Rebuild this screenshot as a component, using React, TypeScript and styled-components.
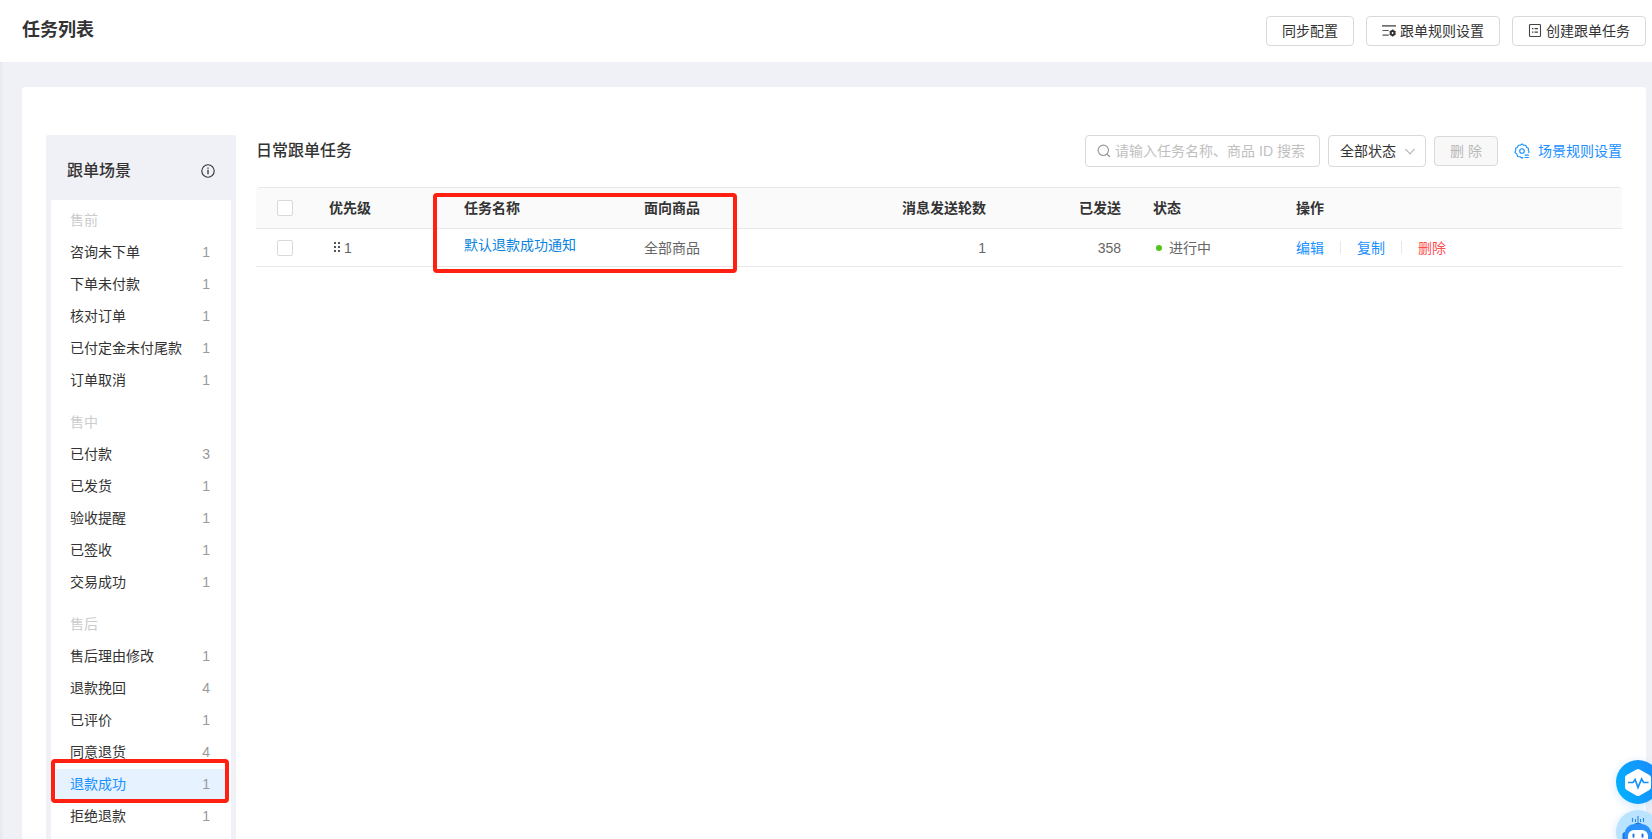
import React from 'react';
import styled, { createGlobalStyle } from 'styled-components';

const GlobalStyle = createGlobalStyle`
  *, *::before, *::after { box-sizing: border-box; }
  body {
    margin: 0;
    background: #f0f1f6;
    color: #333;
    font: 14px/22px "Liberation Sans", "Noto Sans CJK SC", sans-serif;
  }
  button, input, select { font: inherit; color: inherit; }
  h1, h2, h3, ul { margin: 0; padding: 0; }
  ul { list-style: none; }
`;

const Page = styled.div`
  display: flex;
  flex-direction: column;
  height: 100vh;
  overflow: hidden;
  box-shadow: inset 4px 0 4px -3px rgba(0, 0, 0, 0.06);
`;

const Header = styled.header`
  display: flex;
  flex: none;
  align-items: center;
  justify-content: space-between;
  height: 62px;
  padding: 0 6px 0 22px;
  background: #fff;
`;

const PageTitle = styled.h1`
  font-size: 18px;
  line-height: 28px;
  font-weight: 700;
  padding-bottom: 2px;
`;

const HeaderActions = styled.div`
  display: flex;
  gap: 12px;
`;

const Button = styled.button`
  display: inline-flex;
  align-items: center;
  justify-content: center;
  gap: 4px;
  height: 30px;
  padding: 0 15px;
  border: 1px solid #d9d9d9;
  border-radius: 4px;
  background: #fff;
  white-space: nowrap;
  cursor: pointer;

  &:disabled {
    background: #f8f8f8;
    color: #b8b8b8;
    cursor: not-allowed;
  }
`;

const Card = styled.main`
  display: flex;
  flex: 1;
  gap: 20px;
  min-height: 0;
  margin: 25px 6px 0 22px;
  padding: 48px 24px 0;
  border-radius: 4px 4px 0 0;
  background: #fff;
`;

const Sidebar = styled.aside`
  display: flex;
  flex: none;
  flex-direction: column;
  width: 190px;
  padding: 0 5px;
  border-radius: 2px 2px 0 0;
  background: #f0f1f6;
`;

const SidebarHead = styled.div`
  display: flex;
  flex: none;
  align-items: center;
  justify-content: space-between;
  height: 65px;
  padding: 6px 16px 0;
`;

const SectionTitle = styled.h2`
  font-size: 16px;
  line-height: 24px;
  font-weight: 500;
`;

const IconButton = styled.button`
  display: flex;
  padding: 0;
  border: 0;
  background: none;
  cursor: pointer;
`;

const SceneList = styled.nav`
  flex: 1;
  padding: 4px 5px 0;
  border-radius: 2px 2px 0 0;
  background: #fff;
`;

const SceneGroup = styled.section`
  margin-bottom: 10px;
`;

const GroupTitle = styled.h3`
  padding: 0 14px;
  font-size: 14px;
  line-height: 32px;
  font-weight: 400;
  color: #ccc;
`;

const SceneItem = styled.li`
  position: relative;
  padding: 1px 0;
`;

const SceneLink = styled.a<{ $active?: boolean }>`
  display: flex;
  justify-content: space-between;
  padding: 0 16px 0 14px;
  line-height: 30px;
  border-radius: 2px;
  text-decoration: none;
  color: ${(p) => (p.$active ? '#1890ff' : '#333')};
  background: ${(p) => (p.$active ? '#e6f2ff' : 'transparent')};
`;

const Count = styled.span`
  color: #999;
`;

const Marker = styled.div`
  position: absolute;
  border: 4px solid #ff2012;
  border-radius: 4px;
  pointer-events: none;
`;

const SceneMarker = styled(Marker)`
  inset: -9px -3px -3px -5px;
`;

const TableMarker = styled(Marker)`
  top: 6px;
  left: 177px;
  width: 304px;
  height: 80px;
`;

const Content = styled.section`
  flex: 1;
  min-width: 0;
`;

const Toolbar = styled.div`
  display: flex;
  align-items: center;
  justify-content: space-between;
  height: 32px;
  margin-bottom: 20px;
`;

const Filters = styled.div`
  display: flex;
  align-items: center;
  gap: 8px;
`;

const SearchBox = styled.label`
  display: flex;
  align-items: center;
  gap: 4px;
  width: 235px;
  height: 32px;
  padding: 0 11px;
  border: 1px solid #d9d9d9;
  border-radius: 4px;
`;

const SearchInput = styled.input`
  flex: 1;
  min-width: 0;
  padding: 0;
  border: 0;
  outline: 0;
  background: none;
  &::placeholder { color: #bfbfbf; opacity: 1; }
`;

const SelectBox = styled.label`
  display: grid;
  align-items: center;
  width: 98px;
  height: 32px;
  > * { grid-area: 1 / 1; }
  > svg { justify-self: end; margin-right: 10px; pointer-events: none; }
`;

const Select = styled.select`
  width: 100%;
  height: 32px;
  padding: 0 11px;
  border: 1px solid #d9d9d9;
  border-radius: 4px;
  background: #fff;
  appearance: none;
`;

const RuleLink = styled.a`
  display: flex;
  align-items: center;
  gap: 8px;
  margin-left: 8px;
  color: #1890ff;
  text-decoration: none;
`;

const TableWrap = styled.div`
  position: relative;
`;

const Table = styled.table`
  width: 100%;
  table-layout: fixed;
  border-spacing: 0;
  border-top: 1px solid #e8e8e8;
  border-radius: 4px 4px 0 0;
  overflow: hidden;
`;

const Th = styled.th<{ $right?: boolean }>`
  height: 41px;
  padding: 0 16px;
  border-bottom: 1px solid #e8e8e8;
  background: #fafafa;
  font-weight: 700;
  text-align: ${(p) => (p.$right ? 'right' : 'left')};
`;

const Td = styled.td<{ $right?: boolean }>`
  height: 38px;
  padding: 0 16px;
  border-bottom: 1px solid #e8e8e8;
  color: #666;
  text-align: ${(p) => (p.$right ? 'right' : 'left')};
`;

const Checkbox = styled.input`
  display: block;
  width: 16px;
  height: 16px;
  margin: 0 5px;
  border: 1px solid #d9d9d9;
  border-radius: 2px;
  background: #fff;
  appearance: none;
`;

const Priority = styled.span`
  display: flex;
  align-items: center;
  gap: 3px;
  padding-left: 4px;
`;

const TaskLink = styled.a`
  display: block;
  padding-bottom: 6px;
  color: #0a84e0;
  text-decoration: none;
`;

const Status = styled.span`
  display: flex;
  align-items: center;
  gap: 7px;
  padding-left: 3px;
  &::before {
    content: '';
    width: 6px;
    height: 6px;
    border-radius: 50%;
    background: #52c41a;
  }
`;

const RowActions = styled.div`
  display: flex;
  align-items: center;
  gap: 16px;
`;

const Divider = styled.span`
  width: 1px;
  height: 13px;
  background: #e8e8e8;
`;

const ActionLink = styled.a<{ $danger?: boolean }>`
  color: ${(p) => (p.$danger ? '#ff4d4f' : '#1890ff')};
  text-decoration: none;
`;

const FloatDock = styled.div`
  position: fixed;
  right: -8px;
  bottom: -15px;
  display: flex;
  flex-direction: column;
  gap: 6px;
`;

const FloatButton = styled.button<{ $light?: boolean }>`
  display: block;
  width: 44px;
  height: 44px;
  padding: 0;
  border: 0;
  border-radius: 50%;
  overflow: hidden;
  background: ${(p) => (p.$light ? '#b9e3ff' : 'linear-gradient(70deg, #00b4ff, #1c86fb)')};
  box-shadow: 0 2px 10px rgba(24, 144, 255, 0.22);
  cursor: pointer;
`;

const InfoIcon = () => (
  <svg width="14" height="14" viewBox="0 0 14 14" fill="none" stroke="#333" aria-hidden="true">
    <circle cx="7" cy="7" r="6.2" strokeWidth="1.1" />
    <path d="M7 5.8v4.4" strokeWidth="1.3" />
    <path d="M7 3.4v1.4" strokeWidth="1.3" />
  </svg>
);

const RuleIcon = () => (
  <svg width="14" height="14" viewBox="0 0 14 14" fill="none" stroke="#333" aria-hidden="true">
    <path d="M0 1.9h14" strokeWidth="1.2" />
    <path d="M0.5 6.5h6.2M0.5 11.2h6.2" strokeWidth="1.2" stroke="#555" />
    <circle cx="10.6" cy="9" r="1.9" strokeWidth="2" />
    <path
      d="M10.6 5.6v1.4M10.6 11v1.4M7.7 7.3l1.2.7M12.3 10l1.2.7M7.7 10.7l1.2-.7M12.3 8l1.2-.7"
      strokeWidth="1.5"
    />
  </svg>
);

const CreateIcon = () => (
  <svg width="14" height="14" viewBox="0 0 14 14" fill="none" stroke="#444" aria-hidden="true">
    <rect x="1.5" y="0.5" width="11" height="12" rx="1" strokeWidth="1.1" />
    <path d="M4 4.6h1.4M6.5 4.6H10M4 8.1h1.4M6.5 8.1H10" strokeWidth="1.1" />
  </svg>
);

const SearchIcon = () => (
  <svg width="14" height="14" viewBox="0 0 14 14" fill="none" stroke="#999" strokeWidth="1.2" aria-hidden="true">
    <circle cx="6.3" cy="6.3" r="5.2" />
    <path d="M10 10l3 3" />
  </svg>
);

const ChevronIcon = () => (
  <svg width="12" height="12" viewBox="0 0 12 12" fill="none" stroke="#b8b8b8" strokeWidth="1.2" aria-hidden="true">
    <path d="M1.3 3.8L6 8.8l4.7-5" />
  </svg>
);

const GearIcon = () => (
  <svg width="16" height="16" viewBox="0 0 16 16" fill="none" stroke="#1890ff" strokeWidth="1.1" aria-hidden="true">
    <path
      d="M9.2 14.3 8 15.2 6.1 13.8 3.6 13.5 2.9 11.2 0.9 9.3 1.7 7.4 1.6 5.3 3.3 4.4 4.4 2.3 6.4 2.2 8 0.9 9.6 2.2 11.7 2.3 12.7 4.4 14.4 5.3 14.3 7.4 15.1 9 14.4 10"
      strokeLinejoin="round"
    />
    <circle cx="8" cy="8" r="2.3" />
    <path d="M10.6 12.1h4.2M10.6 14.5h4.2" />
  </svg>
);

const DragIcon = () => (
  <svg width="8" height="12" viewBox="0 0 8 12" fill="#555" aria-hidden="true">
    {[0, 4, 8].map((y) => (
      <React.Fragment key={y}>
        <rect x="1" y={y} width="2" height="2" />
        <rect x="5" y={y} width="2" height="2" />
      </React.Fragment>
    ))}
  </svg>
);

const PulseIcon = () => (
  <svg width="44" height="44" viewBox="0 0 44 44" aria-hidden="true">
    <path
      d="M20.4 9.6Q22 8.6 23.6 9.6L33.4 15Q35 16 35 17.6V27.2Q35 29 33.4 29.9L23.8 35.4Q22 36.4 20.2 35.4L10.6 29.9Q9 29 9 27.2V17.6Q9 16 10.6 15Z"
      fill="#fff"
    />
    <path d="M12 22.5h5l2.1-3 2.9 8 3.6-8.5 2 3.5h5" fill="none" stroke="#1593fb" strokeWidth="1.7" />
  </svg>
);

const RobotIcon = () => (
  <svg width="44" height="44" viewBox="0 0 44 44" fill="none" aria-hidden="true">
    <path d="M16.5 8v4M19.5 9v3M22 6v7M24.5 9v3M27.5 8v4" stroke="#2a86ea" strokeWidth="1.1" />
    <path d="M17 14.5Q22 11 27 14.5Z" fill="#1c74e8" />
    <rect x="6.5" y="22" width="31" height="12" rx="3" fill="#1c74e8" />
    <rect x="8.5" y="14" width="27" height="26" rx="10" fill="#2a92fb" />
    <rect x="12" y="20" width="20" height="18" rx="6" fill="#fff" />
    <path d="M17.5 24.5v2.2M26.5 24.5v2.2" stroke="#1c74e8" strokeWidth="2" strokeLinecap="round" />
  </svg>
);

const scenes: { title: string; items: [string, number][] }[] = [
  {
    title: '售前',
    items: [['咨询未下单', 1], ['下单未付款', 1], ['核对订单', 1], ['已付定金未付尾款', 1], ['订单取消', 1]],
  },
  {
    title: '售中',
    items: [['已付款', 3], ['已发货', 1], ['验收提醒', 1], ['已签收', 1], ['交易成功', 1]],
  },
  {
    title: '售后',
    items: [['售后理由修改', 1], ['退款挽回', 4], ['已评价', 1], ['同意退货', 4], ['退款成功', 1], ['拒绝退款', 1]],
  },
];

const activeScene = '退款成功';

export default function App() {
  return (
    <>
      <GlobalStyle />
      <Page>
        <Header>
          <PageTitle>任务列表</PageTitle>
          <HeaderActions>
            <Button type="button">同步配置</Button>
            <Button type="button"><RuleIcon />跟单规则设置</Button>
            <Button type="button"><CreateIcon />创建跟单任务</Button>
          </HeaderActions>
        </Header>
        <Card>
          <Sidebar>
            <SidebarHead>
              <SectionTitle>跟单场景</SectionTitle>
              <IconButton type="button" aria-label="说明"><InfoIcon /></IconButton>
            </SidebarHead>
            <SceneList>
              {scenes.map((group) => (
                <SceneGroup key={group.title}>
                  <GroupTitle>{group.title}</GroupTitle>
                  <ul>
                    {group.items.map(([name, count]) => (
                      <SceneItem key={name}>
                        <SceneLink href="#" $active={name === activeScene}>
                          <span>{name}</span>
                          <Count>{count}</Count>
                        </SceneLink>
                        {name === activeScene && <SceneMarker />}
                      </SceneItem>
                    ))}
                  </ul>
                </SceneGroup>
              ))}
            </SceneList>
          </Sidebar>
          <Content>
            <Toolbar>
              <SectionTitle>日常跟单任务</SectionTitle>
              <Filters>
                <SearchBox>
                  <SearchIcon />
                  <SearchInput type="text" aria-label="搜索任务" placeholder="请输入任务名称、商品 ID 搜索" />
                </SearchBox>
                <SelectBox>
                  <Select aria-label="任务状态">
                    <option>全部状态</option>
                  </Select>
                  <ChevronIcon />
                </SelectBox>
                <Button type="button" disabled>删 除</Button>
                <RuleLink href="#"><GearIcon />场景规则设置</RuleLink>
              </Filters>
            </Toolbar>
            <TableWrap>
              <Table>
                <colgroup>
                  <col width="57" />
                  <col width="135" />
                  <col width="180" />
                  <col width="180" />
                  <col width="194" />
                  <col width="135" />
                  <col width="143" />
                  <col />
                </colgroup>
                <thead>
                  <tr>
                    <Th><Checkbox type="checkbox" aria-label="全选" /></Th>
                    <Th>优先级</Th>
                    <Th>任务名称</Th>
                    <Th>面向商品</Th>
                    <Th $right>消息发送轮数</Th>
                    <Th $right>已发送</Th>
                    <Th>状态</Th>
                    <Th>操作</Th>
                  </tr>
                </thead>
                <tbody>
                  <tr>
                    <Td><Checkbox type="checkbox" aria-label="选择默认退款成功通知" /></Td>
                    <Td><Priority><DragIcon />1</Priority></Td>
                    <Td><TaskLink href="#">默认退款成功通知</TaskLink></Td>
                    <Td>全部商品</Td>
                    <Td $right>1</Td>
                    <Td $right>358</Td>
                    <Td><Status>进行中</Status></Td>
                    <Td>
                      <RowActions>
                        <ActionLink href="#">编辑</ActionLink>
                        <Divider />
                        <ActionLink href="#">复制</ActionLink>
                        <Divider />
                        <ActionLink href="#" $danger>删除</ActionLink>
                      </RowActions>
                    </Td>
                  </tr>
                </tbody>
              </Table>
              <TableMarker />
            </TableWrap>
          </Content>
        </Card>
      </Page>
      <FloatDock>
        <FloatButton type="button" aria-label="诊断"><PulseIcon /></FloatButton>
        <FloatButton type="button" aria-label="智能助手" $light><RobotIcon /></FloatButton>
      </FloatDock>
    </>
  );
}
